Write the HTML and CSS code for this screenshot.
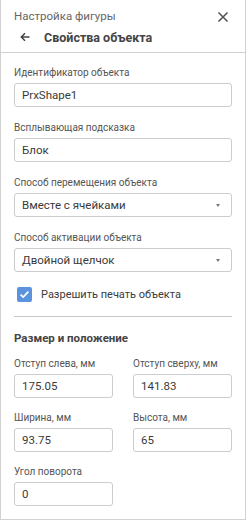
FILE: index.html
```html
<!DOCTYPE html>
<html lang="ru">
<head>
    <meta charset="UTF-8">
    <meta name="viewport" content="width=device-width, initial-scale=1.0">
    <title>Свойства объекта</title>
    <link rel="stylesheet" href="styles.css">
</head>
<body>

    <div class="panel">
        <div class="header">
            <div class="header-top">
                <span class="header-caption">Настройка фигуры</span>
                <svg class="close-icon" width="12" height="12" viewBox="0 0 12 12">
                    <path d="M1.5 1.5 L10.5 10.5 M10.5 1.5 L1.5 10.5" stroke="#555" stroke-width="1.6" fill="none"/>
                </svg>
            </div>
            <div class="header-title">
                <svg class="back-icon" width="10" height="10" viewBox="0 0 10 10">
                    <path d="M9.5 5 H1.5 M5 1.3 L1.3 5 L5 8.7" stroke="#444" stroke-width="1.5" fill="none"/>
                </svg>
                <span>Свойства объекта</span>
            </div>
        </div>

        <div class="content">
            <div class="field">
                <label class="field-label">Идентификатор объекта</label>
                <input class="text-input" type="text" value="PrxShape1">
            </div>
            <div class="field">
                <label class="field-label">Всплывающая подсказка</label>
                <input class="text-input" type="text" value="Блок">
            </div>
            <div class="field">
                <label class="field-label">Способ перемещения объекта</label>
                <div class="select-box">
                    <span>Вместе с ячейками</span>
                    <span class="select-arrow"></span>
                </div>
            </div>
            <div class="field">
                <label class="field-label">Способ активации объекта</label>
                <div class="select-box">
                    <span>Двойной щелчок</span>
                    <span class="select-arrow"></span>
                </div>
            </div>

            <div class="checkbox-row">
                <span class="checkbox">
                    <svg width="15" height="15" viewBox="0 0 15 15">
                        <path d="M3.6 7.6 L6.2 10.1 L11.4 4.6" stroke="#fff" stroke-width="1.7" fill="none"/>
                    </svg>
                </span>
                <span>Разрешить печать объекта</span>
            </div>

            <div class="divider"></div>

            <h3 class="section-title">Размер и положение</h3>

            <div class="grid">
                <div class="field small">
                    <label class="field-label">Отступ слева, мм</label>
                    <input class="text-input" type="text" value="175.05">
                </div>
                <div class="field small">
                    <label class="field-label">Отступ сверху, мм</label>
                    <input class="text-input" type="text" value="141.83">
                </div>
                <div class="field small">
                    <label class="field-label">Ширина, мм</label>
                    <input class="text-input" type="text" value="93.75">
                </div>
                <div class="field small">
                    <label class="field-label">Высота, мм</label>
                    <input class="text-input" type="text" value="65">
                </div>
                <div class="field small">
                    <label class="field-label">Угол поворота</label>
                    <input class="text-input" type="text" value="0">
                </div>
            </div>
        </div>
    </div>

</body>
</html>
```

FILE: styles.css
```css
body {
    font-family: Roboto, "Liberation Sans", sans-serif;
    background-color: #fff;
    margin: 0;
    padding: 0;
    color: #333;
}
.panel {
    width: 246px;
    height: 520px;
    box-sizing: border-box;
    border: 1px solid #d2d2d2;
    border-top: none;
    background-color: #fff;
}
.header {
    height: 45px;
    border-bottom: 1px solid #cfcfcf;
    padding: 7px 0 0 13px;
}
.header-top {
    display: flex;
    align-items: center;
    justify-content: space-between;
    height: 18px;
    padding-right: 16px;
}
.header-caption {
    font-size: 11.5px;
    color: #666;
}
.close-icon {
    margin-top: 2px;
}
.header-title {
    display: flex;
    align-items: center;
    height: 20px;
    margin-top: 2px;
    font-size: 12.5px;
    font-weight: bold;
    color: #444;
}
.back-icon {
    margin-left: 6px;
    margin-right: 14px;
}
.content {
    padding: 13px 13px 0 13px;
}
.field {
    display: flex;
    flex-direction: column;
    margin-bottom: 14px;
}
.field.small {
    margin-bottom: 13px;
}
.field-label {
    font-size: 10px;
    line-height: 14px;
    color: #555;
    margin-bottom: 3px;
}
.text-input {
    height: 24px;
    box-sizing: border-box;
    border: 1px solid #cccccc;
    border-radius: 3px;
    padding: 0 7px;
    font-family: Roboto, "Liberation Sans", sans-serif;
    font-size: 11.5px;
    color: #3a3a3a;
    outline: none;
    width: 100%;
}
.select-box {
    height: 24px;
    box-sizing: border-box;
    border: 1px solid #cccccc;
    border-radius: 3px;
    padding: 0 11px 0 7px;
    font-size: 11.5px;
    color: #3a3a3a;
    display: flex;
    align-items: center;
    justify-content: space-between;
}
.select-arrow {
    width: 0;
    height: 0;
    border-left: 2.5px solid transparent;
    border-right: 2.5px solid transparent;
    border-top: 3px solid #777;
}
.checkbox-row {
    display: flex;
    align-items: center;
    height: 18px;
    margin-top: -1px;
    font-size: 11px;
    color: #3a3a3a;
}
.checkbox {
    width: 15px;
    height: 15px;
    border-radius: 2px;
    background-color: #5b93df;
    margin-left: 3px;
    margin-right: 9px;
    display: flex;
}
.divider {
    height: 1px;
    background-color: #c8c8c8;
    margin-top: 13px;
}
.section-title {
    font-size: 11.5px;
    font-weight: bold;
    color: #444;
    line-height: 16px;
    margin: 13px 0 11px 0;
}
.grid {
    display: grid;
    grid-template-columns: 99px 99px;
    column-gap: 20px;
}
```
